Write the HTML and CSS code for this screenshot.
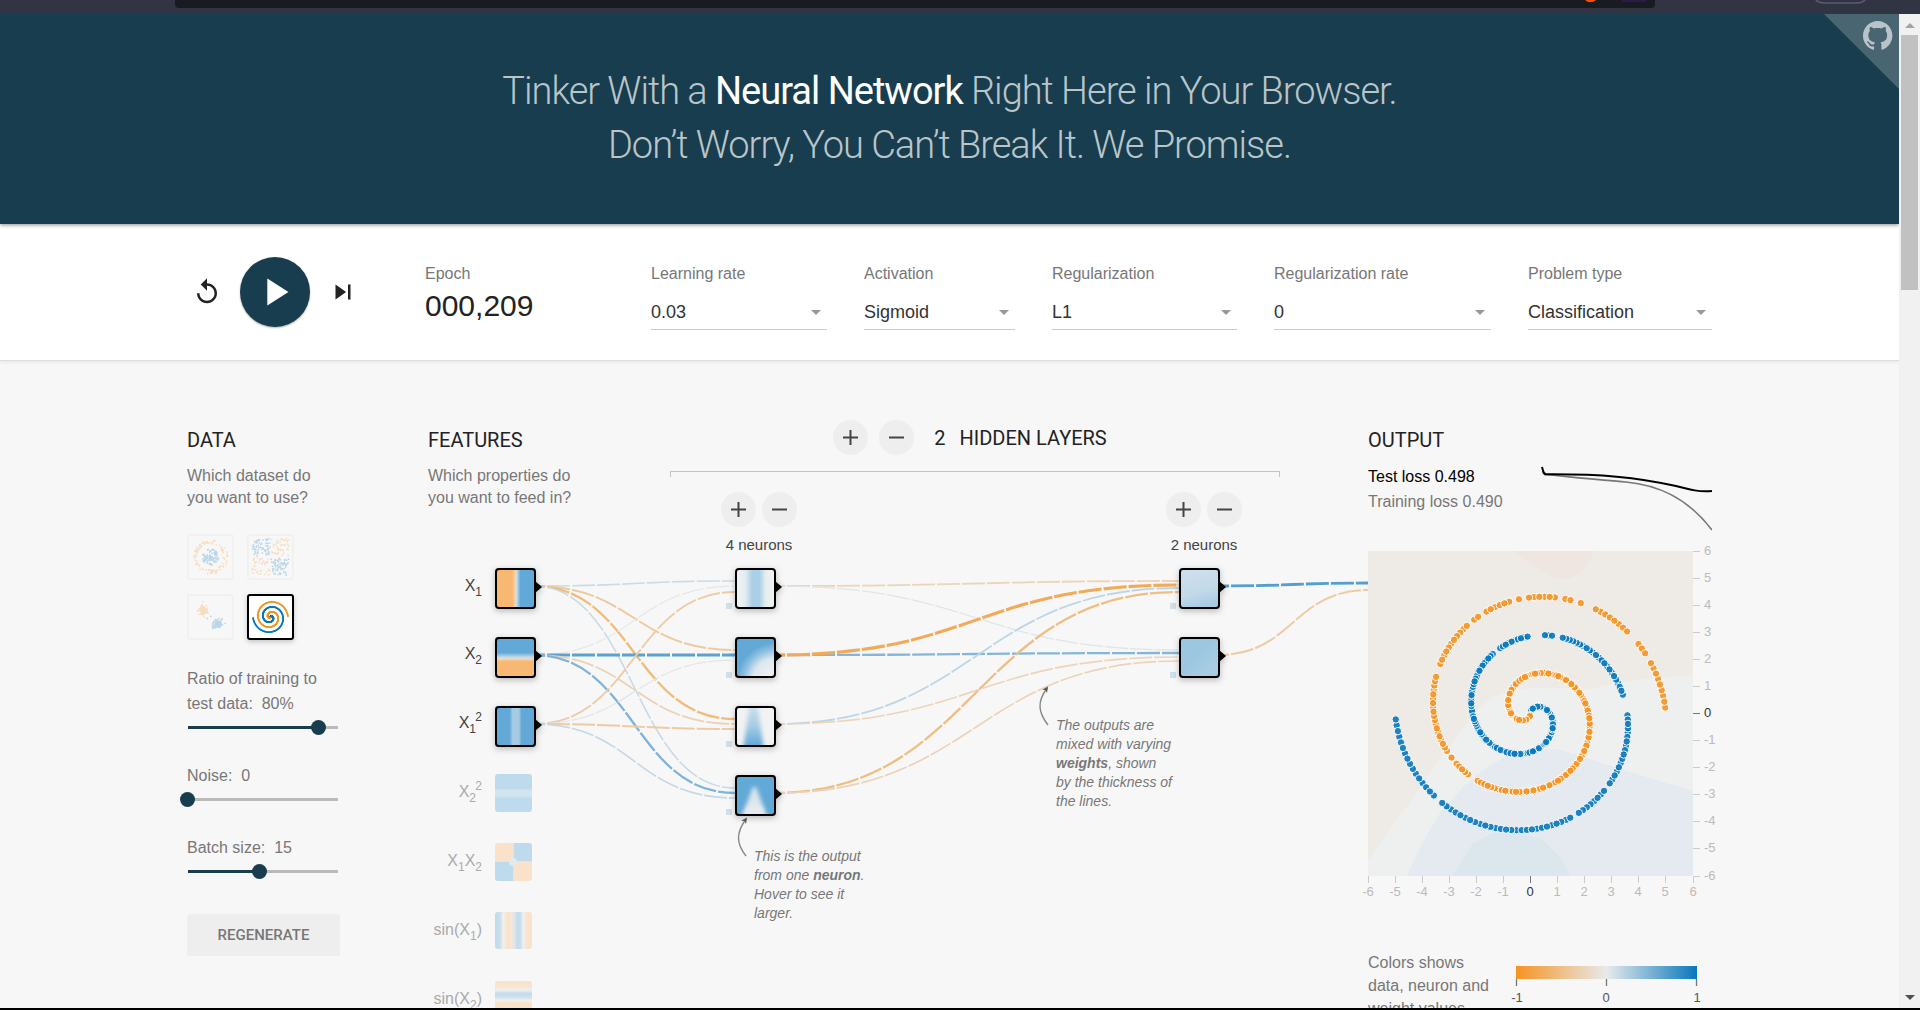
FILE: index.html
```html
<!DOCTYPE html>
<html lang="en">
<head>
<meta charset="utf-8">
<title>A Neural Network Playground</title>
<link rel="stylesheet" href="styles.css">
</head>
<body>
<div class="chrome" aria-hidden="true">
  <div class="address"></div>
  <svg class="chrome-marks" width="320" height="14" viewBox="1560 0 320 14">
    <path d="M1585 0h11l-3 2h-5z" fill="#ff5000"/>
    <path d="M1622 0h24v2h-24z" fill="#2d1a4a"/>
    <path d="M1814-4v0q2 7 10 7h33q8 0 10-7" fill="none" stroke="#5a5b75" stroke-width="1.5"/>
  </svg>
</div>
<div class="window">
  <div class="page">
    <header class="banner">
      <h1>Tinker With a <b>Neural Network</b> Right Here in Your Browser.<br>Don’t Worry, You Can’t Break It. We Promise.</h1>
      <a class="github" href="#" aria-label="View on GitHub">
        <svg width="75" height="75" viewBox="0 0 75 75">
          <path d="M0 0h75v75z" fill="#4a6572"/>
          <path transform="translate(39 7) scale(1.84)" fill="#b9c4ca" d="M8 0C3.58 0 0 3.58 0 8c0 3.54 2.29 6.53 5.47 7.59.4.07.55-.17.55-.38 0-.19-.01-.82-.01-1.49-2.01.37-2.53-.49-2.69-.94-.09-.23-.48-.94-.82-1.13-.28-.15-.68-.52-.01-.53.63-.01 1.08.58 1.23.82.72 1.21 1.87.87 2.33.66.07-.52.28-.87.51-1.07-1.78-.2-3.64-.89-3.64-3.95 0-.87.31-1.59.82-2.15-.08-.2-.36-1.02.08-2.12 0 0 .67-.21 2.2.82.64-.18 1.32-.27 2-.27s1.36.09 2 .27c1.53-1.04 2.2-.82 2.2-.82.44 1.1.16 1.92.08 2.12.51.56.82 1.27.82 2.15 0 3.07-1.87 3.75-3.65 3.95.29.25.54.73.54 1.48 0 1.07-.01 1.93-.01 2.2 0 .21.15.46.55.38A8.01 8.01 0 0 0 16 8c0-4.42-3.58-8-8-8z"/>
        </svg>
      </a>
    </header>

    <div class="controls">
      <div class="controls-inner">
        <div class="transport">
          <button class="icon-button" aria-label="Reset"><svg width="30" height="30" viewBox="0 0 24 24"><path d="M12 5V1L7 6l5 5V7c3.31 0 6 2.69 6 6s-2.69 6-6 6-6-2.69-6-6H4c0 4.42 3.58 8 8 8s8-3.58 8-8-3.58-8-8-8z"/></svg></button>
          <button class="icon-button play" aria-label="Run"><svg width="46" height="46" viewBox="0 0 24 24"><path d="M8 5v14l11-7z"/></svg></button>
          <button class="icon-button" aria-label="Step"><svg width="30" height="30" viewBox="0 0 24 24"><path d="M6 18l8.5-6L6 6v12zM16 6v12h2V6h-2z"/></svg></button>
        </div>
        <div class="epoch"><span class="caption">Epoch</span><span class="epoch-value">000,209</span></div>
        <div class="field rate"><label for="lr">Learning rate</label><div class="select"><select id="lr"><option>0.03</option></select></div></div>
        <div class="field activation"><label for="act">Activation</label><div class="select"><select id="act"><option>Sigmoid</option></select></div></div>
        <div class="field reg"><label for="reg">Regularization</label><div class="select"><select id="reg"><option>L1</option></select></div></div>
        <div class="field reg-rate"><label for="rr">Regularization rate</label><div class="select"><select id="rr"><option>0</option></select></div></div>
        <div class="field problem"><label for="pt">Problem type</label><div class="select"><select id="pt"><option>Classification</option></select></div></div>
      </div>
    </div>

    <main class="main">
      <section class="data">
        <h2>Data</h2>
        <p>Which dataset do<br>you want to use?</p>
        <div class="datasets">
          <button class="dataset" aria-label="Circle"><svg viewBox="-6 -6 12 12" data-set="circle"></svg></button>
          <button class="dataset" aria-label="Exclusive or"><svg viewBox="-6 -6 12 12" data-set="xor"></svg></button>
          <button class="dataset" aria-label="Gaussian"><svg viewBox="-6 -6 12 12" data-set="gauss"></svg></button>
          <button class="dataset selected" aria-label="Spiral"><svg viewBox="-6 -6 12 12" data-set="spiral"></svg></button>
        </div>
        <div class="slider"><label for="ratio">Ratio of training to test data: &nbsp;80%</label><input id="ratio" type="range" min="10" max="90" value="80" style="--fill:87%"></div>
        <div class="slider"><label for="noise">Noise: &nbsp;0</label><input id="noise" type="range" min="0" max="50" value="0" style="--fill:0%"></div>
        <div class="slider"><label for="batch">Batch size: &nbsp;15</label><input id="batch" type="range" min="1" max="30" value="15" style="--fill:48%"></div>
        <button class="regenerate">Regenerate</button>
      </section>

      <div class="diagram">
        <svg class="network" width="940" height="600" viewBox="428 428 940 600">
          <defs>
            <linearGradient id="x1"><stop offset=".42" stop-color="#f9b872"/><stop offset=".5" stop-color="#f2d5b4"/><stop offset=".53" stop-color="#c9dcea"/><stop offset=".62" stop-color="#62a9d7"/></linearGradient>
            <linearGradient id="x2" x2="0" y2="1"><stop offset=".38" stop-color="#62a9d7"/><stop offset=".5" stop-color="#c9dcea"/><stop offset=".54" stop-color="#f2d5b4"/><stop offset=".6" stop-color="#f9b872"/></linearGradient>
            <linearGradient id="sq"><stop offset=".36" stop-color="#62a9d7"/><stop offset=".43" stop-color="#a5cbe4"/><stop offset=".58" stop-color="#a5cbe4"/><stop offset=".65" stop-color="#62a9d7"/></linearGradient>
            <linearGradient id="sq2" x2="0" y2="1"><stop offset=".38" stop-color="#bedaed"/><stop offset=".43" stop-color="#d2e5ee"/><stop offset=".58" stop-color="#d2e5ee"/><stop offset=".65" stop-color="#bedaed"/></linearGradient>
            <linearGradient id="s1"><stop offset="0" stop-color="#bedaed"/><stop offset=".14" stop-color="#cbdfeb"/><stop offset=".22" stop-color="#f2f0ee"/><stop offset=".34" stop-color="#fae2ca"/><stop offset=".44" stop-color="#f8e5d2"/><stop offset=".52" stop-color="#dfe8ed"/><stop offset=".6" stop-color="#c3dcec"/><stop offset=".68" stop-color="#c8deec"/><stop offset=".77" stop-color="#f0f0f0"/><stop offset=".86" stop-color="#f9e3cd"/></linearGradient>
            <linearGradient id="s2" x2="0" y2="1"><stop offset="0" stop-color="#fae2ca"/><stop offset=".16" stop-color="#f8e5d2"/><stop offset=".24" stop-color="#f0f0f0"/><stop offset=".34" stop-color="#c3dcec"/><stop offset=".44" stop-color="#cfe1ec"/><stop offset=".52" stop-color="#f2efec"/><stop offset=".6" stop-color="#fae2ca"/></linearGradient>
            <linearGradient id="h1"><stop offset=".05" stop-color="#eff2f3"/><stop offset=".25" stop-color="#e4ecf1"/><stop offset=".42" stop-color="#abcfe6"/><stop offset=".6" stop-color="#abcfe6"/><stop offset=".74" stop-color="#e4ecf1"/><stop offset=".9" stop-color="#f1f2f1"/></linearGradient>
            <radialGradient id="h2" cx="1" cy="1.1" r="1.05"><stop offset=".3" stop-color="#ebeef1"/><stop offset=".55" stop-color="#dde7ef"/><stop offset=".76" stop-color="#8fbfe0"/><stop offset=".92" stop-color="#62a9d7"/></radialGradient>
            <linearGradient id="h3" x2="0" y2="1"><stop offset="0" stop-color="#d3e3ee"/><stop offset=".5" stop-color="#a6cce5"/><stop offset=".9" stop-color="#62a9d7"/></linearGradient>
            <linearGradient id="o1" x1=".3" x2=".6" y2="1"><stop offset=".2" stop-color="#ccddeb"/><stop offset=".6" stop-color="#c2d9e9"/><stop offset=".95" stop-color="#a6cbe3"/></linearGradient>
            <linearGradient id="o2" x2="1" y2="1"><stop offset=".4" stop-color="#9bc7e1"/><stop offset=".8" stop-color="#a9cce3"/></linearGradient>
            <filter id="soft" x="-30%" y="-30%" width="160%" height="160%"><feGaussianBlur stdDeviation="2"/></filter>
            <clipPath id="tile"><rect width="37" height="37" x="2" y="2"/></clipPath>
            <g id="frame"><rect x="1" y="1" width="39" height="39" rx="3" fill="none" stroke="#000" stroke-width="2"/><path d="M40 13l7 6-7 6z"/></g>
            <marker id="head" viewBox="0 0 10 10" refX="7" refY="5" markerWidth="7" markerHeight="6" orient="auto" markerUnits="userSpaceOnUse"><path d="M0 0L10 5 0 10 3 5z" fill="#555"/></marker>
          </defs>

          <g class="links">
            <path d="M534 586C634 586 634 581 735 581" stroke="#c8dbe7" stroke-width="1.6"/>
            <path d="M534 586C634 586 634 650 735 650" stroke="#efcaa0" stroke-width="2"/>
            <path d="M534 586C634 586 634 719 735 719" stroke="#f1bd7c" stroke-width="2.4"/>
            <path d="M534 586C634 586 634 788 735 788" stroke="#c5d9e6" stroke-width="1.5"/>
            <path d="M534 655C634 655 634 586 735 586" stroke="#e3e6e7" stroke-width="1.1"/>
            <path d="M534 655H735" stroke="#5ba2d0" stroke-width="2.8"/>
            <path d="M534 655C634 655 634 724 735 724" stroke="#ecd1b3" stroke-width="1.7"/>
            <path d="M534 655C634 655 634 793 735 793" stroke="#80b5d9" stroke-width="2.3"/>
            <path d="M534 724C634 724 634 592 735 592" stroke="#eecca5" stroke-width="1.9"/>
            <path d="M534 724C634 724 634 660 735 660" stroke="#dfe6e9" stroke-width="1.2"/>
            <path d="M534 724C634 724 634 729 735 729" stroke="#eecba3" stroke-width="2"/>
            <path d="M534 724C634 724 634 798 735 798" stroke="#c2d8e6" stroke-width="1.6"/>
            <path d="M774 586C976 586 976 581 1179 581" stroke="#ecd4b8" stroke-width="1.8"/>
            <path d="M774 586C976 586 976 650 1179 650" stroke="#e0e5e8" stroke-width="1.3"/>
            <path d="M774 655C976 655 976 653 1179 653" stroke="#84b6d9" stroke-width="2.3"/>
            <path d="M774 655C976 655 976 585 1179 585" stroke="#f3aa58" stroke-width="3.1"/>
            <path d="M774 724C976 724 976 588 1179 588" stroke="#bdd5e5" stroke-width="1.8"/>
            <path d="M774 724C976 724 976 657 1179 657" stroke="#ecd5bc" stroke-width="1.7"/>
            <path d="M774 793C976 793 976 592 1179 592" stroke="#f0bd83" stroke-width="2.3"/>
            <path d="M774 793C976 793 976 661 1179 661" stroke="#ecd3b7" stroke-width="1.7"/>
            <path d="M1218 586C1293 586 1293 583 1368 583" stroke="#559fd0" stroke-width="2.8"/>
            <path d="M1218 655C1293 655 1293 590 1368 590" stroke="#eecba3" stroke-width="2"/>
          </g>

          <g fill="#d0dfe8"><path d="M726 603h6v6h-6zM726 672h6v6h-6zM726 741h6v6h-6zM726 809h6v6h-6zM1170 603h6v6h-6zM1170 672h6v6h-6z"/></g>

          <g class="node" transform="translate(495 568)"><rect width="41" height="41" rx="3" fill="url(#x1)"/><use href="#frame"/></g>
          <g class="node" transform="translate(495 637)"><rect width="41" height="41" rx="3" fill="url(#x2)"/><use href="#frame"/></g>
          <g class="node" transform="translate(495 706)"><rect width="41" height="41" rx="3" fill="url(#sq)"/><use href="#frame"/></g>
          <rect x="495" y="774" width="37" height="38" rx="3" fill="url(#sq2)"/>
          <g transform="translate(495 843)"><path d="M3 0H18V19H0V3Q0 0 3 0zM19 19H37V35Q37 38 34 38H19z" fill="#fae2ca"/><path d="M18 0H34Q37 0 37 3V19H18zM0 19H19V38H3Q0 38 0 35z" fill="#bedaed"/><path d="M18 0h1v38h-1zM0 18h37v1H0z" fill="#e2e5e4"/><circle cx="18" cy="19" r="4" fill="#e6e9ea"/></g>
          <rect x="495" y="912" width="37" height="37" rx="3" fill="url(#s1)"/>
          <rect x="495" y="981" width="37" height="37" rx="3" fill="url(#s2)"/>

          <g class="node" transform="translate(735 568)"><rect width="41" height="41" rx="3" fill="url(#h1)"/><use href="#frame"/></g>
          <g class="node" transform="translate(735 637)"><rect width="41" height="41" rx="3" fill="url(#h2)"/><use href="#frame"/></g>
          <g class="node" transform="translate(735 706)"><rect width="41" height="41" rx="3" fill="#f1f2f3"/><g clip-path="url(#tile)"><path d="M15 -4h7l7 48H8z" fill="url(#h3)" filter="url(#soft)"/></g><use href="#frame"/></g>
          <g class="node" transform="translate(735 775)"><rect width="41" height="41" rx="3" fill="#62a9d7"/><g clip-path="url(#tile)"><path d="M18 12h3l12 32H6z" fill="#dbe6ee" filter="url(#soft)"/><ellipse cx="19" cy="38" rx="9" ry="8" fill="#e6ebf0" filter="url(#soft)"/></g><use href="#frame"/></g>
          <g class="node" transform="translate(1179 568)"><rect width="41" height="41" rx="3" fill="url(#o1)"/><use href="#frame"/></g>
          <g class="node" transform="translate(1179 637)"><rect width="41" height="41" rx="3" fill="url(#o2)"/><use href="#frame"/></g>

          <g class="labels" text-anchor="end">
            <text x="482" y="591">X<tspan class="small" dy="5">1</tspan></text>
            <text x="482" y="659">X<tspan class="small" dy="5">2</tspan></text>
            <text x="476" y="728">X<tspan class="small" dy="5">1</tspan></text><text class="small" x="482" y="721">2</text>
            <g class="off">
              <text x="476" y="797">X<tspan class="small" dy="5">2</tspan></text><text class="small" x="482" y="790">2</text>
              <text x="482" y="866">X<tspan class="small" dy="5">1</tspan><tspan dy="-5">X</tspan><tspan class="small" dy="5">2</tspan></text>
              <text x="482" y="935">sin(X<tspan class="small" dy="5">1</tspan><tspan dy="-5">)</tspan></text>
              <text x="482" y="1004">sin(X<tspan class="small" dy="5">2</tspan><tspan dy="-5">)</tspan></text>
            </g>
          </g>

          <g fill="none" stroke="#888" stroke-width="1.4">
            <path d="M746 856C736 843 736 833 746 819" marker-end="url(#head)"/>
            <path d="M1048 725C1038 712 1037 702 1047 688" marker-end="url(#head)"/>
          </g>
          <g class="callout">
            <text x="754" y="861">This is the output</text><text x="754" y="880">from one <tspan class="strong">neuron</tspan>.</text><text x="754" y="899">Hover to see it</text><text x="754" y="918">larger.</text>
            <text x="1056" y="730">The outputs are</text><text x="1056" y="749">mixed with varying</text><text x="1056" y="768"><tspan class="strong">weights</tspan>, shown</text><text x="1056" y="787">by the thickness of</text><text x="1056" y="806">the lines.</text>
          </g>
        </svg>

        <section class="features">
          <h2>Features</h2>
          <p>Which properties do<br>you want to feed in?</p>
        </section>
        <section class="hidden-layers">
          <div class="layers-head">
            <div class="layer-buttons">
              <button class="round" aria-label="Add layer"><svg width="15" height="15"><path d="M0 7.5h15M7.5 0v15"/></svg></button>
              <button class="round" aria-label="Remove layer"><svg width="15" height="15"><path d="M0 7.5h15"/></svg></button>
            </div>
            <h2><span>2</span><span>Hidden layers</span></h2>
          </div>
          <div class="bracket"></div>
          <div class="layer-controls">
            <div class="layer-control">
              <button class="round" aria-label="Add neuron to layer 1"><svg width="15" height="15"><path d="M0 7.5h15M7.5 0v15"/></svg></button>
              <button class="round" aria-label="Remove neuron from layer 1"><svg width="15" height="15"><path d="M0 7.5h15"/></svg></button>
              <span>4 neurons</span>
            </div>
            <div class="layer-control">
              <button class="round" aria-label="Add neuron to layer 2"><svg width="15" height="15"><path d="M0 7.5h15M7.5 0v15"/></svg></button>
              <button class="round" aria-label="Remove neuron from layer 2"><svg width="15" height="15"><path d="M0 7.5h15"/></svg></button>
              <span>2 neurons</span>
            </div>
          </div>
        </section>
      </div>

      <section class="output">
        <h2>Output</h2>
        <div class="metrics">
          <div><div class="test-loss">Test loss 0.498</div><div class="train-loss">Training loss 0.490</div></div>
          <svg width="171" height="66" viewBox="0 0 171 66" fill="none">
            <path d="M3 8.500C20 10 60 14 85 16C115 19 145 30 171 64" stroke="#777" stroke-width="1.6"/>
            <path d="M1 1L2 4.500Q2.500 8 5 8.300C60 8 95 11 135 20C150 24 158 26 171 25" stroke="#000" stroke-width="2"/>
          </svg>
        </div>
        <svg class="plot" width="344" height="352" viewBox="0 -4 344 352">
          <path d="M0 0h325v325H0z" fill="#eeebe6"/>
          <path d="M146 0C160 12 178 27 196 28C212 28 220 12 227 0z" fill="#efe6e1"/>
          <path d="M325 124L286 127 270 129 245 133 224 138 190 137 150 138 125 146 110 158 100 172 72 207 49 242 29 269 0 309V325H325z" fill="#eef0f0"/>
          <path d="M325 240L305 234 265 222 225 209 189 198 162 197 139 204 115 219 95 236 72 262 52 296 39 325H325z" fill="#e4eaef"/>
          <path d="M84 325L105 292 125 282 149 281 175 289 192 306 202 325z" fill="#dce7ed"/>
          <g id="axes" class="axes"></g>
          <g id="points" class="points"></g>
        </svg>
        <div class="legend">
          <p>Colors shows<br>data, neuron and<br>weight values.</p>
          <svg width="200" height="42" viewBox="-10 0 200 42">
            <defs><linearGradient id="scale"><stop offset="0" stop-color="#f59322"/><stop offset=".5" stop-color="#e8eaeb"/><stop offset="1" stop-color="#0877bd"/></linearGradient></defs>
            <path d="M0 0h181v13H0z" fill="url(#scale)"/>
            <path d="M.5 13v7M90.500 13v7M180.500 13v7" stroke="#777" stroke-width="1.3"/>
            <g class="scale-labels" text-anchor="middle"><text x="1" y="36">-1</text><text x="90" y="36">0</text><text x="181" y="36">1</text></g>
          </svg>
        </div>
      </section>
    </main>
  </div>
  <div class="scrollbar" aria-hidden="true"><i class="up"></i><i class="thumb"></i><i class="down"></i></div>
</div>
<script src="plot.js"></script>
</body>
</html>
```
FILE: styles.css
```css
* { box-sizing: border-box; }
body {
  margin: 0;
  height: 100vh;
  display: flex;
  flex-direction: column;
  overflow: hidden;
  border-bottom: 2px solid #000;
  background: #f7f7f7;
  font-family: "Liberation Sans", Arial, sans-serif;
  font-size: 16px;
  color: #777;
}
button { border: 0; padding: 0; background: none; font: inherit; cursor: pointer; }
svg { display: block; }

.chrome { position: relative; flex: none; height: 14px; background: #313442; }
.address { width: 1480px; height: 8px; margin-left: 175px; border-radius: 0 0 4px 4px; background: #181b22; }
.chrome-marks { position: absolute; top: 0; right: 40px; }

.window { flex: 1; min-height: 0; display: flex; }
.page { flex: 1; min-width: 0; overflow: hidden; }
.scrollbar {
  width: 21px;
  flex: none;
  display: flex;
  flex-direction: column;
  align-items: center;
  background: #f1f1f1;
}
.up, .down { border: 5px solid transparent; border-top: 0; }
.up { border-bottom-color: #a3a3a3; margin: 9px 0 7px; }
.down { border-top: 5px solid #505050; border-bottom: 0; margin: auto 0 8px; }
.thumb { width: 17px; height: 255px; background: #c1c1c1; }

.banner {
  position: relative;
  z-index: 1;
  padding: 50px 0 52px;
  background: #183d4e;
  box-shadow: 0 1px 4px rgba(0, 0, 0, .45);
}
.banner h1 {
  margin: 0;
  font: 300 38px/54px Roboto, sans-serif;
  letter-spacing: -1px;
  text-align: center;
  color: #bac5ca;
}
.banner b { font-weight: 400; color: #fff; }
.github { position: absolute; top: 0; right: 0; }

.controls { height: 137px; background: #fff; border-bottom: 1px solid #ddd; box-shadow: 0 1px 4px rgba(0, 0, 0, .08); }
.controls-inner, .main { width: 1525px; margin: 0 auto; }
.controls-inner { display: flex; gap: 37px; padding-top: 33px; }
.transport { display: flex; align-items: center; gap: 18px; height: 70px; width: 201px; padding-left: 5px; }
.icon-button { width: 30px; height: 30px; fill: #222; }
.play {
  width: 70px;
  height: 70px;
  display: grid;
  place-items: center;
  border-radius: 50%;
  background: #183d4e;
  fill: #fff;
  box-shadow: 0 1px 2px rgba(0, 0, 0, .3);
}
.epoch { width: 189px; display: flex; flex-direction: column; padding-top: 6px; }
.epoch-value { font-size: 30px; line-height: 42px; color: #222; }
.caption, .field label { display: block; line-height: 22px; }
.field { padding-top: 6px; }
.rate { width: 176px; }
.activation { width: 151px; }
.reg { width: 185px; }
.problem { width: 184px; }
.reg-rate { width: 217px; }
.select { position: relative; margin-top: 9px; border-bottom: 1px solid #ccc; }
.select::after {
  content: "";
  position: absolute;
  right: 6px;
  top: 16px;
  border: 5px solid transparent;
  border-top-color: #999;
  border-bottom: 0;
}
.select select {
  appearance: none;
  display: block;
  width: 100%;
  height: 35px;
  border: 0;
  padding: 0;
  background: none;
  font: 18px/34px "Liberation Sans", Arial, sans-serif;
  color: #333;
}

.main { display: grid; grid-template-columns: 241px 940px 344px; padding-top: 67px; }
h2 { margin: 0; font: 400 20px/24px Roboto, sans-serif; text-transform: uppercase; color: #222; }
p { margin: 13px 0 0; line-height: 22px; }

.data { width: 153px; }
.datasets { display: grid; grid-template-columns: 47px 47px; gap: 14px 13px; margin: 25px 0 26px; }
.dataset { height: 46px; border: 2px solid #e2e2e2; border-radius: 3px; opacity: .25; }
.dataset svg { width: 43px; height: 42px; }
.dataset.selected { border-color: #000; background: #fff; opacity: 1; box-shadow: 0 2px 5px rgba(0, 0, 0, .2); }
.slider { margin-bottom: 28px; }
.slider label { display: block; line-height: 25px; }
.slider input {
  appearance: none;
  display: block;
  width: 165px;
  height: 15px;
  margin: 4px -7px 0;
  background: linear-gradient(90deg, #183d4e var(--fill), #bbb var(--fill)) center / 150px 3px no-repeat;
}
.slider input::-webkit-slider-thumb { appearance: none; width: 15px; height: 15px; border-radius: 50%; background: #183d4e; }
.regenerate {
  width: 153px;
  height: 42px;
  margin-top: 7px;
  border-radius: 3px;
  background: #eee;
  font: 500 15px/42px Roboto, sans-serif;
  text-transform: uppercase;
  color: #777;
}

.diagram { position: relative; display: grid; grid-template-columns: 242px 610px; align-items: start; }
.network { position: absolute; top: 0; left: 0; pointer-events: none; }
.links { fill: none; stroke-dasharray: 23 2; stroke-dashoffset: 12; }
.node { filter: drop-shadow(0 2px 3px rgba(0, 0, 0, .25)); }
.labels { font-size: 16px; fill: #444; }
.labels .small { font-size: 12px; }
.labels .off { fill: #aaa; }
.callout { font-size: 14px; font-style: italic; fill: #777; }
.callout .strong { font-weight: 700; }

.features, .hidden-layers { position: relative; }
.hidden-layers { margin-top: -8px; }
.layers-head { display: flex; justify-content: center; align-items: center; gap: 20px; padding-right: 10px; }
.layers-head h2 { display: flex; gap: 14px; }
.layer-buttons { display: flex; gap: 11px; }
.round {
  width: 35px;
  height: 35px;
  display: grid;
  place-items: center;
  border-radius: 50%;
  background: #eee;
}
.round path { stroke: #444; stroke-width: 2px; }
.bracket { height: 6px; margin-top: 16px; border: 1px solid #c4c4c4; border-bottom: 0; }
.layer-controls { display: flex; justify-content: space-between; padding: 15px 38px 0 51px; }
.layer-control { display: grid; grid-template-columns: 35px 35px; gap: 8px 6px; }
.layer-control span { grid-column: 1 / 3; font-size: 15px; line-height: 20px; text-align: center; color: #444; }

.metrics { display: flex; justify-content: space-between; align-items: flex-start; line-height: 25px; margin-top: 12px; height: 83px; white-space: nowrap; }
.metrics svg { margin-top: 2px; }
.test-loss { color: #000; }
.plot { overflow: visible; }
.axes { font-size: 13px; fill: #bbb; stroke: none; }
.axes .tick { stroke: #ccc; stroke-width: 1px; }
.axes .zero { fill: #333; }
.axes .tick.zero { stroke: #777; }
.points circle { stroke: #fff; stroke-width: 1px; opacity: .9; }
.legend { display: flex; justify-content: space-between; margin-top: 52px; white-space: nowrap; }
.legend p { margin: 0; line-height: 23px; }
.legend svg { margin: 15px 6px 0 0; overflow: visible; }
.scale-labels { font-size: 13px; fill: #555; }
```
FILE: plot.js
```js
const SVG = "http://www.w3.org/2000/svg";
const ORANGE = "#f59322";
const BLUE = "#0877bd";

let seed = 7;
function random() {
  seed = (seed * 16807) % 2147483647;
  return seed / 2147483647;
}
function normal() {
  return Math.sqrt(-2 * Math.log(random())) * Math.cos(2 * Math.PI * random());
}
function add(parent, name, attributes, text) {
  const node = document.createElementNS(SVG, name);
  for (const key in attributes) node.setAttribute(key, attributes[key]);
  if (text !== undefined) node.textContent = text;
  parent.appendChild(node);
}

// A point of one spiral arm; u runs from 0 (centre) to 1 (outer end).
function arm(u, offset) {
  const angle = 3.5 * Math.PI * u + offset;
  return [5 * u * Math.sin(angle), -5 * u * Math.cos(angle)];
}

const samples = {
  circle() {
    const list = [];
    for (let i = 0; i < 200; i++) {
      const inner = i % 2 === 0;
      const r = inner ? 2.4 * random() : 3.7 + 1.2 * random();
      const a = 2 * Math.PI * random();
      list.push([r * Math.cos(a), r * Math.sin(a), inner ? BLUE : ORANGE]);
    }
    return list;
  },
  xor() {
    const list = [];
    for (let i = 0; i < 220; i++) {
      const x = random() * 10 - 5, y = random() * 10 - 5;
      list.push([x + Math.sign(x) * .2, y + Math.sign(y) * .2, x * y > 0 ? BLUE : ORANGE]);
    }
    return list;
  },
  gauss() {
    const list = [];
    for (let i = 0; i < 200; i++) {
      const s = i % 2 ? 1 : -1;
      list.push([s * 2 + normal() * .7, s * 1.9 + normal() * .6, s > 0 ? BLUE : ORANGE]);
    }
    return list;
  },
  spiral() {
    const list = [];
    for (let i = 0; i < 250; i++) {
      list.push([...arm(i / 250, 0), BLUE], [...arm(i / 250, Math.PI), ORANGE]);
    }
    return list;
  }
};
for (const svg of document.querySelectorAll("[data-set]")) {
  for (const [x, y, fill] of samples[svg.dataset.set]()) {
    add(svg, "circle", { cx: x, cy: y, r: .25, fill });
  }
}

// Axes of the output plot, one tick per unit.
const UNIT = 325 / 12;
const CENTRE = 162.5;
const axes = document.getElementById("axes");
for (let v = -6; v <= 6; v++) {
  const at = Math.floor(CENTRE + v * UNIT);
  const up = Math.floor(CENTRE - v * UNIT);
  const zero = v === 0 ? " zero" : "";
  add(axes, "path", { d: `M${at + .5} 325v7`, class: "tick" + zero });
  add(axes, "path", { d: `M325 ${up + .5}h7`, class: "tick" + zero });
  add(axes, "text", { x: at, y: 345, "text-anchor": "middle", class: zero.trim() }, v);
  add(axes, "text", { x: 336, y: up + 4, class: zero.trim() }, v);
}

// Stretches of each arm that hold no training point.
const gaps = {
  [BLUE]: [[.52, .5316], [.57, .588], [.596, .608], [.696, .716], [.78, .788], [.816, .8237], [.928, .936]],
  [ORANGE]: [[.633, .644], [.66, .667], [.667, .676], [.748, .76], [.8, .808], [.812, .8197], [.84, .848],
    [.848, .8556], [.8757, .8837], [.888, .896], [.896, .9075], [.936, .948], [.956, .964]]
};
const dots = [];
for (const [fill, offset] of [[ORANGE, Math.PI], [BLUE, 0]]) {
  for (let i = 2; i < 250; i++) {
    const u = i / 250;
    if (gaps[fill].some(([from, to]) => u > from + .001 && u < to - .001)) continue;
    dots.push([...arm(u, offset), fill, random()]);
  }
}
dots.sort((a, b) => a[3] - b[3]);
const points = document.getElementById("points");
for (const [x, y, fill] of dots) {
  add(points, "circle", { cx: CENTRE + x * UNIT, cy: CENTRE + y * UNIT, r: 3.7, fill });
}
```
